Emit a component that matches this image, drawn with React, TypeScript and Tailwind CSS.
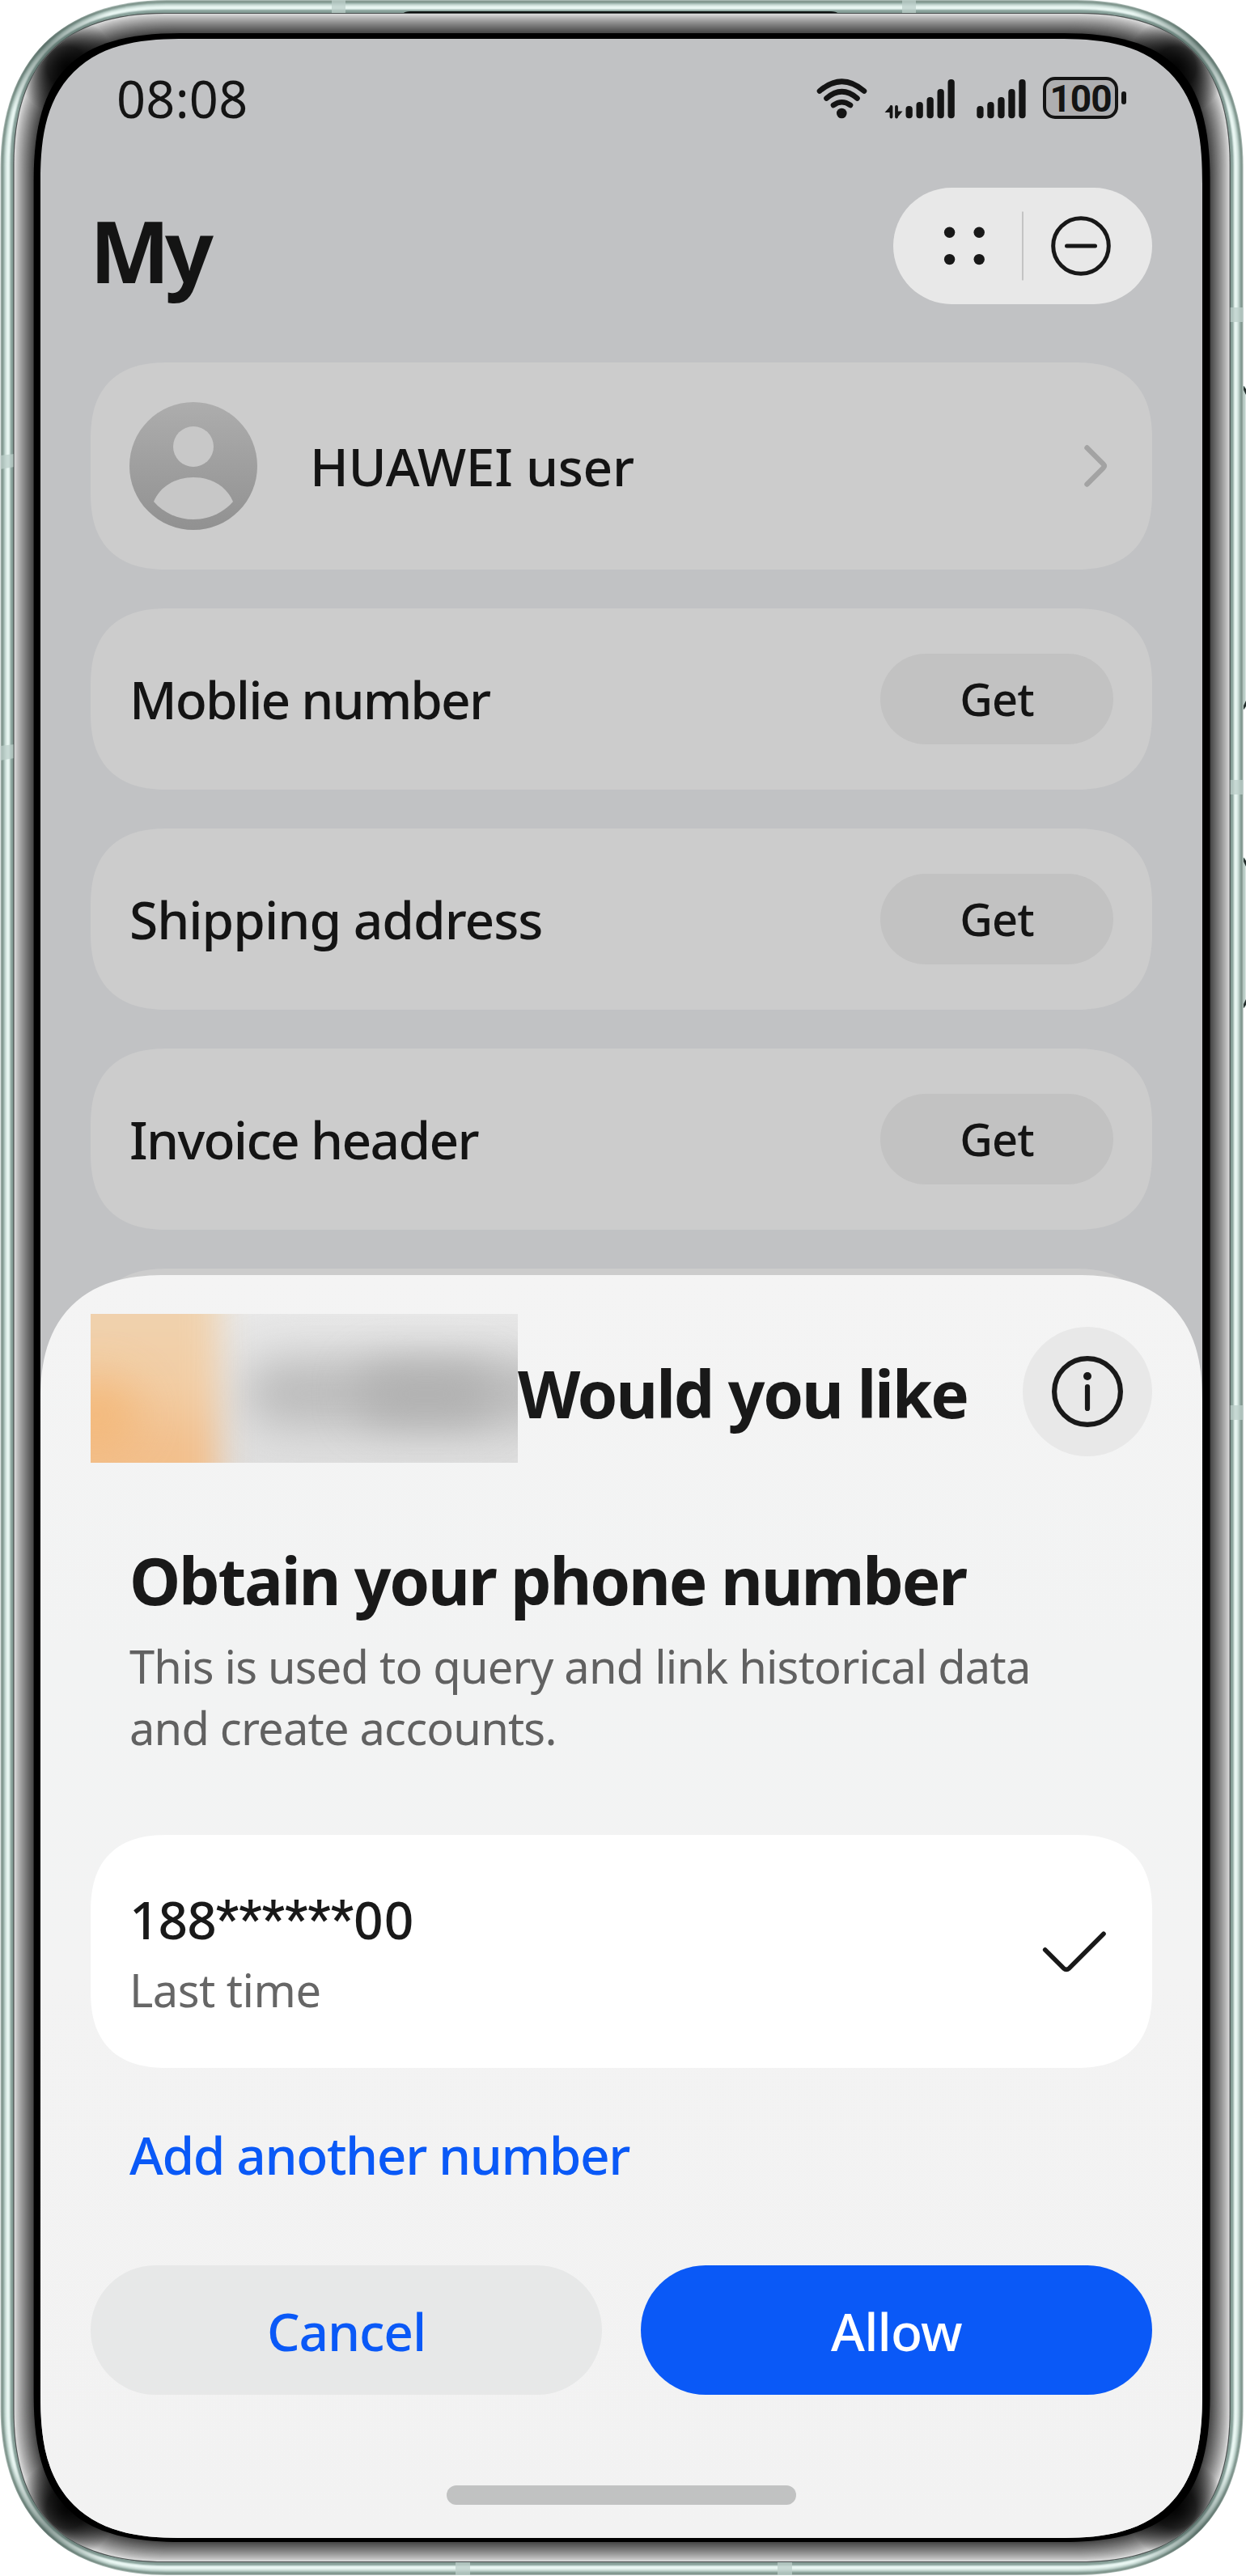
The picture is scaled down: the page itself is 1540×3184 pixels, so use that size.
import type { ReactNode } from "react";

const W = 1536;
const H = 3183;

const lerp = (a: number, b: number, t: number) => a + (b - a) * t;

/** Smooth-cornered outline of the handset, inset by d pixels. */
function outline(d: number) {
  const extent = d < 17 ? lerp(206, 186, d / 17) : lerp(186, 180, (d - 17) / 32);
  const diagonal = d < 17 ? lerp(54, 63, d / 17) - d : lerp(63, 89, (d - 17) / 32) - d;
  const c = (8 * diagonal - extent) / 3;
  const l = d + 0.6;
  const t = d;
  const r = W - d + 0.6;
  const b = H - d;
  return [
    `M${l} ${t + extent}`,
    `C${l} ${t + c} ${l + c} ${t} ${l + extent} ${t}`,
    `H${r - extent}`,
    `C${r - c} ${t} ${r} ${t + c} ${r} ${t + extent}`,
    `V${b - extent}`,
    `C${r} ${b - c} ${r - c} ${b} ${r - extent} ${b}`,
    `H${l + extent}`,
    `C${l + c} ${b} ${l} ${b - c} ${l} ${b - extent}`,
    "Z",
  ].join(" ");
}

const metal = [
  "#a9bab5", "#84988f", "#82978f", "#8fa69f", "#a7bdb6", "#bdd0ca", "#cfe0db", "#dcebe6",
  "#e7f5f1", "#eaf7f3", "#e4f2ee", "#c9dbd6", "#9db4ae", "#8ba39c", "#87a099", "#809790", "#4c5151",
];

const rings = [
  ...metal.map((fill, d) => ({ d, fill })),
  ...Array.from({ length: 24 }, (_, i) => {
    const v = Math.round(lerp(218, 72, Math.pow(i / 23, 0.85)));
    return { d: 17 + i, fill: `rgb(${v},${v},${v})` };
  }),
  { d: 41, fill: "#000" },
];

const corners = [
  [0, 0],
  [1, 0],
  [0, 1],
  [1, 1],
];

function PhoneFrame() {
  return (
    <svg className="absolute left-0 top-0 h-[3184px] w-[1540px]" viewBox="0 0 1540 3184" aria-hidden="true">
      <defs>
        <radialGradient id="cornerShade">
          <stop offset="0" stopColor="#000" stopOpacity="0.95" />
          <stop offset="0.4" stopColor="#000" stopOpacity="0.8" />
          <stop offset="1" stopColor="#000" stopOpacity="0" />
        </radialGradient>
        <radialGradient id="metalShade">
          <stop offset="0" stopColor="#3d524c" stopOpacity="0.55" />
          <stop offset="1" stopColor="#3d524c" stopOpacity="0" />
        </radialGradient>
        <clipPath id="body"><path d={outline(0)} /></clipPath>
        <clipPath id="glass"><path d={outline(17)} /></clipPath>
      </defs>
      <rect x="1534" y="477" width="5.5" height="400" rx="3" fill="#bccfc9" />
      <rect x="1534" y="1060" width="5.5" height="186" rx="3" fill="#bccfc9" />
      <path d="M1537 477l3 4v7l-3-6ZM1537 877l3-4v-7l-3 6ZM1537 1060l3 4v7l-3-6ZM1537 1246l3-4v-7l-3 6Z" fill="#26302e" />
      {rings.slice(0, 17).map((r) => (
        <path key={r.d} d={outline(r.d)} fill={r.fill} />
      ))}
      <g clipPath="url(#body)">
        {corners.map(([x, y]) => (
          <circle key={`${x}${y}`} cx={x ? W - 54 : 54} cy={y ? H - 54 : 54} r="90" fill="url(#metalShade)" />
        ))}
        <g fill="#bccfc9" fillOpacity="0.75">
          <rect x="410" y="0" width="17" height="18" />
          <rect x="1115" y="0" width="17" height="18" />
          <rect x="563" y="3166" width="18" height="18" />
          <rect x="961" y="3166" width="18" height="18" />
          <path d="M0 563l18-2v16l-18 3ZM0 922l18-2v17l-18 3Z" />
          <rect x="1519" y="380" width="18" height="18" />
          <rect x="1519" y="964" width="18" height="18" />
          <rect x="1519" y="1737" width="18" height="18" />
        </g>
      </g>
      <path d="M497 17q4-3 10-3h520q6 0 10 3Z" fill="#0d1110" />
      {rings.slice(16).map((r) => (
        <path key={r.d} d={outline(r.d)} fill={r.fill} />
      ))}
      <g clipPath="url(#glass)">
        {corners.map(([x, y]) => (
          <circle key={`${x}${y}`} cx={x ? W - 83 : 83} cy={y ? H - 83 : 83} r="62" fill="url(#cornerShade)" />
        ))}
      </g>
    </svg>
  );
}

const barTops = [130, 125, 119, 109, 97];

function StatusIcons() {
  return (
    <div className="flex items-center">
      <svg className="h-[52px] w-[272px]" viewBox="1005 94 272 52" fill="none" stroke="#141414" strokeWidth="6.6" strokeLinecap="round">
        <path d="M1013 111.5q27.5-23.5 55 0M1021.5 120.5q19-16.5 38 0M1030 129q10.500-7.500 21 0" />
        <circle cx="1040.3" cy="139" r="6.3" fill="#141414" stroke="none" />
        <path d="M1101.5 131v12.500M1108 131v12.500" strokeWidth="3.8" />
        <path d="M1093.5 138l8-9v9ZM1115.500 136.500l-7.500 9v-9Z" fill="#141414" stroke="none" />
        <g fill="#141414" stroke="none">
          {barTops.map((y, i) => (
            <rect key={`a${y}`} x={1119.5 + i * 13} y={y} width="8.3" height={145.3 - y} rx="4.1" />
          ))}
          {barTops.map((y, i) => (
            <rect key={`b${y}`} x={1207.3 + i * 13} y={y} width="8.3" height={145.3 - y} rx="4.1" />
          ))}
        </g>
      </svg>
      <div className="ml-3 flex h-[52px] w-[93px] items-center justify-center rounded-[15px] border-4 border-[#141414] bg-[#aeaeb0] pt-0.5 font-['Roboto'] text-[46px] font-bold leading-none tracking-[-1px] text-[#141414]">
        100
      </div>
      <div className="ml-1 h-4 w-1.5 rounded-full bg-[#141414]" />
    </div>
  );
}

function Card({ className, children }: { className: string; children?: ReactNode }) {
  return (
    <div className={`flex items-center justify-between rounded-[96px] bg-[#cccccc] px-12 [corner-shape:superellipse(1.3)] ${className}`}>
      {children}
    </div>
  );
}

function Avatar() {
  return (
    <svg className="h-[158px] w-[158px]" viewBox="0 0 158 158" aria-hidden="true">
      <defs>
        <linearGradient id="avatar" x1="0" y1="0" x2="0" y2="1">
          <stop offset="0" stopColor="#adadad" />
          <stop offset="1" stopColor="#919191" />
        </linearGradient>
      </defs>
      <circle cx="79" cy="79" r="79" fill="url(#avatar)" />
      <circle cx="79" cy="55" r="25" fill="#c8c8c8" />
      <path d="M30 123C38 104 57 93 79 93s41 11 49 30C116 137 98 145 79 145S42 137 30 123Z" fill="#c7c7c7" />
    </svg>
  );
}

const rows = [
  { label: "Moblie number", spacing: "tracking-[-1.9px]" },
  { label: "Shipping address", spacing: "tracking-[-1px]" },
  { label: "Invoice header", spacing: "tracking-[-1.7px]" },
];

function ConsentSheet() {
  return (
    <section className="absolute inset-x-0 top-[1528px] flex h-[1561px] flex-col rounded-t-[156px] bg-[linear-gradient(#f4f4f4,#f2f3f3_30%,#f3f3f3_55%,#f2f2f2)] px-[62px] pt-12 text-[#191919] [corner-shape:superellipse(1.3)]">
      <header className="flex h-[184px] items-center">
        <div className="relative h-[184px] w-[528px] shrink-0 overflow-hidden bg-[linear-gradient(#e8e8e8,#dfdfdf)]">
          <div className="absolute left-[190px] top-[56px] h-[84px] w-[400px] rounded-full bg-[#bbbbbb] blur-[28px]" />
          <div className="absolute left-[330px] top-[66px] h-[66px] w-[170px] rounded-full bg-[#b0b0b0] blur-[26px]" />
          <div className="absolute -left-16 -top-16 h-[312px] w-[222px] bg-[linear-gradient(#f0d2ae_20%,#f2cda4_50%,#f2bf8c_75%)] blur-[20px]" />
          <div className="absolute -left-12 top-[80px] h-[90px] w-[110px] rounded-full bg-[#f4b674] opacity-80 blur-[28px]" />
        </div>
        <h2 className="mt-[11px] whitespace-nowrap text-[80px] font-bold leading-[96px] tracking-[-2.2px]">Would you like</h2>
        <button className="ml-auto mt-2 flex h-40 w-40 shrink-0 items-center justify-center rounded-full bg-[#e8e8e8]">
          <svg className="h-[88px] w-[88px]" viewBox="0 0 88 88" fill="none" stroke="#191919" strokeWidth="6.2" strokeLinecap="round">
            <circle cx="44" cy="44" r="40.9" />
            <path d="M44 38v27" />
            <circle cx="44" cy="25" r="5" fill="#191919" stroke="none" />
          </svg>
        </button>
      </header>

      <div className="mt-[97px] px-12">
        <h3 className="whitespace-nowrap text-[80px] font-bold leading-[96px] tracking-[-2.2px]">Obtain your phone number</h3>
        <p className="mt-[20px] whitespace-nowrap text-[56px] leading-[76px] tracking-[-0.8px] text-[#616161]">
          This is used to query and link historical data
          <br />
          and create accounts.
        </p>
      </div>

      <div className="mt-[95px] flex h-72 items-center justify-between rounded-[96px] bg-white px-12 [corner-shape:superellipse(1.3)]">
        <div className="flex flex-col pt-1">
          <span className="flex text-[64px] font-medium leading-[80px] tracking-[-1px]">
            188
            <span className="font-['Roboto'] tracking-normal">******</span>
            <span className="tracking-[1px]">00</span>
          </span>
          <span className="mt-2.5 text-[56px] leading-[72px] tracking-[-0.5px] text-[#666666]">Last time</span>
        </div>
        <svg className="mr-2 h-[52px] w-[80px]" viewBox="1288 2386 80 52" fill="none" stroke="#191919" strokeWidth="5.6" strokeLinecap="round" strokeLinejoin="round">
          <path d="M1291.700 2410l22.800 22.800q3.500 3 7 0l42.500-42.500" />
        </svg>
      </div>

      <a className="ml-12 mt-[68px] whitespace-nowrap text-[64px] font-medium leading-[80px] tracking-[-1.4px] text-[#0a59f7]">
        Add another number
      </a>

      <div className="mt-[96px] flex gap-12">
        <button className="h-40 flex-1 rounded-full bg-[#e7e8e8] pt-1 text-[64px] font-medium tracking-[-1.1px] text-[#0a59f7]">Cancel</button>
        <button className="h-40 flex-1 rounded-full bg-[#0a59f7] pt-1 text-[64px] font-medium tracking-[-0.8px] text-white">Allow</button>
      </div>

      <div className="mt-28 h-6 w-[432px] self-center rounded-full bg-[#c1c2c2]" />
    </section>
  );
}

export default function App() {
  return (
    <div className="relative h-[3184px] w-[1540px] overflow-hidden bg-white pl-[50px] pt-12 font-['Noto_Sans',sans-serif] text-[#141414]">
      <PhoneFrame />
      <main className="relative h-[3089px] w-[1436px] overflow-hidden rounded-[180px] bg-[#c1c2c4] [corner-shape:superellipse(1.42)]">
        <div className="flex h-[146px] items-center justify-between pl-[94px] pr-[94px]">
          <span className="text-[63px] leading-none tracking-[0.3px]">08:08</span>
          <StatusIcons />
        </div>

        <div className="mt-[38px] flex h-36 items-center justify-between px-[62px]">
          <h1 className="-ml-px mt-2.5 text-[105px] font-bold leading-none tracking-[-6px]">My</h1>
          <div className="flex h-36 w-80 items-center rounded-full bg-[#e8e8e8]">
            <svg className="h-36 w-80" viewBox="1104 232 320 144" fill="none" stroke="#181818" strokeLinecap="round">
              <g fill="#181818" stroke="none">
                <circle cx="1173.6" cy="287.3" r="6.7" />
                <circle cx="1210.2" cy="287.3" r="6.7" />
                <circle cx="1173.6" cy="320.6" r="6.7" />
                <circle cx="1210.2" cy="320.6" r="6.7" />
              </g>
              <path d="M1264 261.500v85" stroke="#b9b9b9" strokeWidth="1.5" strokeLinecap="butt" />
              <circle cx="1336" cy="304" r="34.3" strokeWidth="5" />
              <path d="M1318.500 304h35" strokeWidth="5" />
            </svg>
          </div>
        </div>

        <div className="mt-[72px] flex flex-col gap-12 px-[62px]">
          <Card className="h-64">
            <div className="flex items-center gap-[65px]">
              <Avatar />
              <span className="pt-0.5 text-[64px] font-medium tracking-[-0.3px]">HUAWEI user</span>
            </div>
            <svg className="mr-1.5 h-[54px] w-[30px]" viewBox="0 0 30 54" fill="none" stroke="#a3a3a3" strokeWidth="6.4" strokeLinecap="round" strokeLinejoin="round">
              <path d="M3.500 4.500l20 20q2.500 2.500 0 5l-20 20" />
            </svg>
          </Card>
          {rows.map((row) => (
            <Card key={row.label} className="h-56">
              <span className={`pt-0.5 text-[64px] font-medium ${row.spacing}`}>{row.label}</span>
              <button className="h-28 w-72 rounded-full bg-[#c2c2c2] pb-0.5 text-[56px] font-medium tracking-[-1px]">Get</button>
            </Card>
          ))}
          <Card className="h-56" />
        </div>

        <ConsentSheet />
      </main>
    </div>
  );
}
